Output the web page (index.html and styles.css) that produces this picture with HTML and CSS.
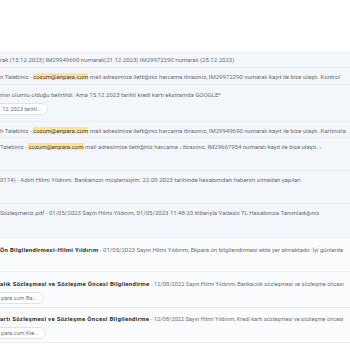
FILE: index.html
```html
<!DOCTYPE html>
<html lang="tr">
<head>
<meta charset="utf-8">
<link rel="stylesheet" href="styles.css">
</head>
<body>
<div class="top"></div>
<div class="list">
  <div class="row row-a"><div class="line">rak (15.12.2023) IM29949690 numaralı(21.12.2023) IM29972290 numaralı (25.12.2023)</div></div>
  <div class="row row-b1"><div class="line">n Talebiniz - <span class="hl">cozum@enpara.com</span> mail adresimize ilettiğiniz harcama itirazınız, IM29972290 numaralı kayıt ile bize ulaştı. Kontrol</div></div>
  <div class="row row-b2"><div class="line">mın olumlu olduğu belirtildi. Ama 15.12.2023 tarihli kredi kartı ekstramda GOOGLE*</div>
    <div class="chips"><span class="chip">.12.2023 tarihl...</span></div></div>
  <div class="row row-c"><div class="line">h Talebiniz - <span class="hl">cozum@enpara.com</span> mail adresimize ilettiğiniz harcama itirazınız, IM29949690 numaralı kayıt ile bize ulaştı. Kartınızla</div></div>
  <div class="row row-d"><div class="line">Talebiniz - <span class="hl">cozum@enpara.com</span> mail adresimize ilettiğiniz harcama › itirazınız, IM29667954 numaralı kayıt ile bize ulaştı. ›</div></div>
  <div class="row row-e"><div class="line">0174) - Adım Hilmi Yıldırım. Bankanızın müşterisiyim. 22.09.2023 tarihinde hesabımdan haberim olmadan yapılan</div></div>
  <div class="row row-f"><div class="line">Sözleşmeniz.pdf - 01/05/2023 Sayın Hilmi Yıldırım, 01/05/2023 11:48:20 itibarıyla Vadesiz TL Hesabınıza Tanımladığınız</div></div>
  <div class="row row-g unread"><div class="line"><b>Ön Bilgilendirmesi-Hilmi Yıldırım</b> - 01/05/2023 Sayın Hilmi Yıldırım, Ekpara ön bilgilendirmesi ekte yer almaktadır. İyi günlerde</div></div>
  <div class="row row-h unread"><div class="line"><b>alık Sözleşmesi ve Sözleşme Öncesi Bilgilendirme</b> <span class="tight">- 12/08/2022 Sayın Hilmi Yıldırım, Bankacılık sözleşmesi ve sözleşme öncesi</span></div>
    <div class="chips"><span class="chip">para.com Ba...</span></div></div>
  <div class="row row-i unread"><div class="line"><b>artı Sözleşmesi ve Sözleşme Öncesi Bilgilendirme</b> <span class="tight">- 12/08/2022 Sayın Hilmi Yıldırım, Kredi kartı sözleşmesi ve sözleşme öncesi</span></div>
    <div class="chips"><span class="chip">para.com Kre...</span></div></div>
</div>
</body>
</html>
```
FILE: styles.css
```css
html, body {
  margin: 0;
  padding: 0;
  background: #ffffff;
  width: 350px;
  height: 350px;
  overflow: hidden;
  font-family: Roboto, "Noto Sans", sans-serif;
}
.top {
  height: 51px;
  background: #ffffff;
}
.list {
  background: #f3f6fb;
}
.row {
  box-sizing: border-box;
  border-bottom: 1px solid #ebeef2;
  overflow: hidden;
}
.line {
  font-size: 6px;
  line-height: 17px;
  height: 17px;
  color: #6b6f74;
  white-space: nowrap;
  overflow: hidden;
}
.line b {
  color: #2c2e31;
  font-weight: 700;
  letter-spacing: 0.3px;
}
.tight {
  font-size: 5.7px;
}
.hl {
  background: #fde49c;
  color: #444;
}
.unread {
  background: #fbfcfe;
}
.chips {
  display: flex;
  margin-left: -10px;
}
.chip {
  font-size: 5.6px;
  color: #6b6f74;
  border: 1px solid #dfe2e6;
  border-radius: 7px;
  height: 12px;
  line-height: 11px;
  padding: 0 6px 0 10px;
  background: #fff;
  box-sizing: border-box;
}
.row-a { height: 17px; }
.row-b1 { height: 17px; }
.row-b2 { height: 37px; padding-top: 1px; }
.row-c { height: 16px; }
.row-d { height: 33px; }
.row-e { height: 33px; }
.row-f { height: 34px; }
.row-g { height: 34px; padding-top: 3px; }
.row-h { height: 36px; padding-top: 3px; }
.row-i { height: 35px; padding-top: 2px; }
.row-b2 .chips { margin-top: 0; }
.row-h .chips, .row-i .chips { margin-top: 0; }
```
